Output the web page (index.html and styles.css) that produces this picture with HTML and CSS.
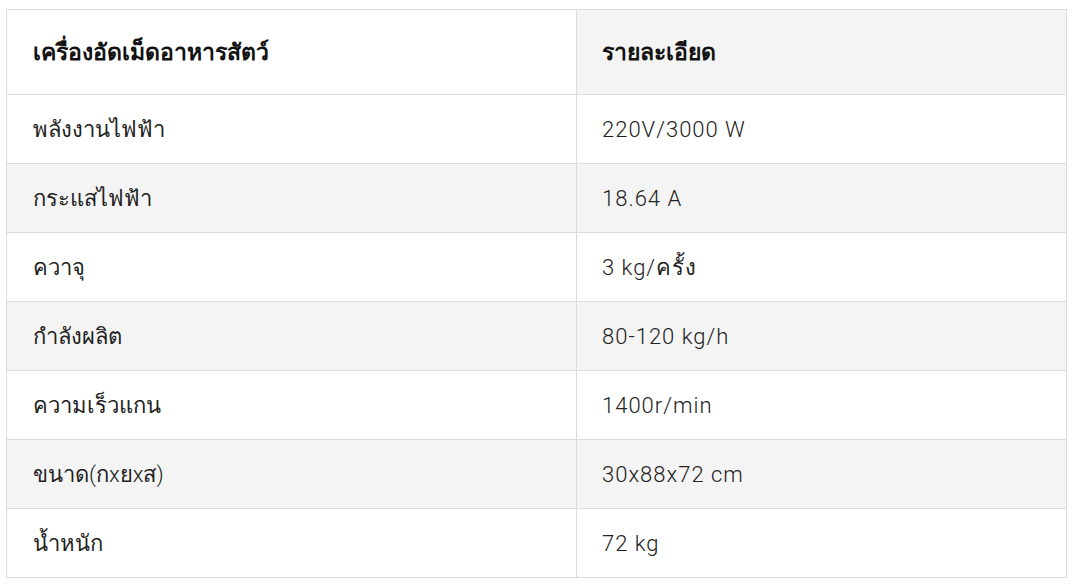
FILE: index.html
```html
<!DOCTYPE html>
<html lang="th">
<head>
<meta charset="utf-8">
<link rel="stylesheet" href="styles.css">
</head>
<body>
<div class="wrap">
<table class="spec">
  <thead>
    <tr><th class="c1">เครื่องอัดเม็ดอาหารสัตว์</th><th class="c2">รายละเอียด</th></tr>
  </thead>
  <tbody>
    <tr><td>พลังงานไฟฟ้า</td><td class="val">220V/3000 W</td></tr>
    <tr><td>กระแสไฟฟ้า</td><td class="val">18.64 A</td></tr>
    <tr><td>ควาจุ</td><td class="val">3 kg/ครั้ง</td></tr>
    <tr><td>กำลังผลิต</td><td class="val">80-120 kg/h</td></tr>
    <tr><td>ความเร็วแกน</td><td class="val">1400r/min</td></tr>
    <tr><td>ขนาด(กxยxส)</td><td class="val">30x88x72 cm</td></tr>
    <tr><td>น้ำหนัก</td><td class="val">72 kg</td></tr>
  </tbody>
</table>
</div>
</body>
</html>
```
FILE: styles.css
```css
html, body { margin: 0; padding: 0; background: #fff; }
.wrap { padding: 9px 0 0 6px; }
.spec {
  border-collapse: collapse;
  width: 1061px;
  table-layout: fixed;
  font-family: Roboto, "Noto Sans", sans-serif;
  font-size: 22px;
  color: #222;
}
.spec th, .spec td {
  border: 1px solid #dcdcdc;
  text-align: left;
  padding: 0 0 0 26px;
  vertical-align: middle;
}
.spec th { height: 84px; font-weight: 700; color: #111; font-size: 23px; }
.spec td { height: 68px; font-weight: 300; }
.spec .c1 { width: 543px; background: #fff; }
.spec .c2 { background: #f4f4f4; padding-left: 25px; }
.spec td.val { padding-left: 25px; letter-spacing: 1px; }
.spec tbody tr:nth-child(even) td { background: #f4f4f4; }
```
